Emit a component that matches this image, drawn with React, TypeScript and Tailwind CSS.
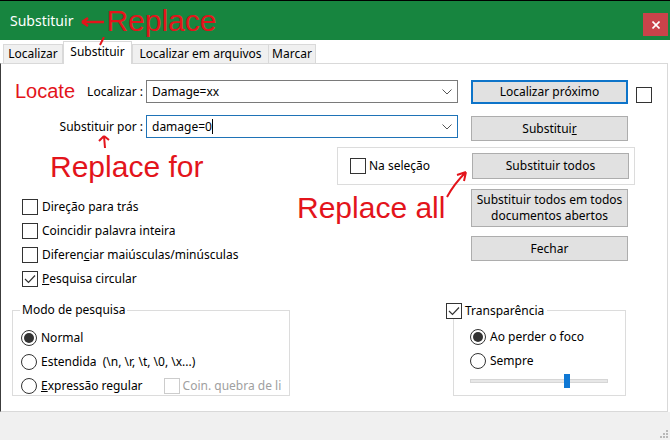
import React from 'react';

const red = "text-[#e3141b] font-['Liberation_Sans',Arial,sans-serif]";

function Check({ checked = false, disabled = false }: { checked?: boolean; disabled?: boolean }) {
  return (
    <span
      className={`w-[16px] h-[16px] shrink-0 border bg-white flex items-center justify-center ${
        disabled ? 'border-[#cccccc]' : 'border-[#333333]'
      }`}
    >
      {checked && (
        <svg width="12" height="10" viewBox="0 0 12 10" fill="none">
          <path d="M1 5 L4.5 8.5 L11 1.5" stroke="#333" strokeWidth="1.2" />
        </svg>
      )}
    </span>
  );
}

function Radio({ checked = false }: { checked?: boolean }) {
  return (
    <span className="w-[16px] h-[16px] shrink-0 rounded-full border border-[#333333] bg-white flex items-center justify-center">
      {checked && <span className="w-[10px] h-[10px] rounded-full bg-[#333333]" />}
    </span>
  );
}

function Btn({ children, className = '', border = 'border border-[#adadad]' }: { children: React.ReactNode; className?: string; border?: string }) {
  return (
    <button
      type="button"
      className={`w-[157px] shrink-0 bg-[#e1e1e1] ${border} flex items-center justify-center text-center leading-[16px] ${className}`}
    >
      {children}
    </button>
  );
}

function Combo({ value, focused = false }: { value: string; focused?: boolean }) {
  return (
    <div
      className={`w-[312px] h-[23px] shrink-0 bg-white border flex items-center pl-[5px] pr-[3px] ${
        focused ? 'border-[#1f73b7]' : 'border-[#7a7a7a]'
      }`}
    >
      <span>{value}</span>
      {focused && <span className="w-px h-[15px] bg-black" />}
      <svg className="ml-auto mr-[2px]" width="10" height="6" viewBox="0 0 10 6" fill="none">
        <path d="M0.5 0.5 L5 5 L9.5 0.5" stroke="#555" strokeWidth="1" />
      </svg>
    </div>
  );
}

function Row({ children }: { children: React.ReactNode }) {
  return <div className="h-[24px] flex items-center gap-[4px]">{children}</div>;
}

export default function App() {
  return (
    <div className="w-[670px] h-[440px] bg-white flex flex-col overflow-hidden font-['Noto_Sans',sans-serif] text-[12px] text-black">
      {/* title bar */}
      <div className="h-[40px] shrink-0 border-t border-black bg-[#17853f] flex items-center pl-[10px] pr-[2px]">
        <span className="text-white text-[14px] leading-none">Substituir</span>
        <svg className="ml-[7px]" width="25" height="14" viewBox="0 0 25 14" fill="none">
          <path d="M2 8 H24 M2 8 L8 4 M2 8 L8 12" stroke="#e3141b" strokeWidth="2.5" />
        </svg>
        <span className={`${red} text-[30px] leading-none ml-[1px]`}>Replace</span>
        <div className="ml-auto self-end mb-[4px] w-[25px] h-[23px] bg-[#c9434a] flex items-center justify-center">
          <svg width="8" height="8" viewBox="0 0 8 8">
            <path d="M0.5 0.5 L7.5 7.5 M7.5 0.5 L0.5 7.5" stroke="#fff" strokeWidth="1.6" />
          </svg>
        </div>
      </div>

      {/* tabs */}
      <div className="h-[24px] shrink-0 flex items-end pl-[3px] relative z-10">
        <div className="w-[60px] h-[19px] mb-px bg-[#f0f0f0] border border-b-0 border-[#d9d9d9] flex items-center justify-center">
          Localizar
        </div>
        <div className="w-[69px] h-[23px] bg-white border border-b-0 border-[#d9d9d9] flex items-start justify-center pt-[1px] relative">
          Substituir
          <svg className="absolute left-[34px] top-[-5px]" width="8" height="9" viewBox="0 0 8 9" fill="none">
            <path d="M6 0 L2 8" stroke="#e3141b" strokeWidth="2" />
          </svg>
        </div>
        <div className="w-[137px] h-[19px] mb-px bg-[#f0f0f0] border border-b-0 border-[#d9d9d9] flex items-center justify-center">
          Localizar em arquivos
        </div>
        <div className="w-[48px] h-[19px] mb-px -ml-px bg-[#f0f0f0] border border-b-0 border-[#d9d9d9] flex items-center justify-center">
          Marcar
        </div>
      </div>

      {/* panel */}
      <div className="h-[349px] shrink-0 -mt-px mr-[2px] border border-[#d9d9d9] border-l-[#3c3c3c] flex flex-col">
        {/* find */}
        <div className="mt-[16px] flex items-start">
          <div className="w-[145px] h-[23px] shrink-0 flex items-center justify-between pl-[14px] pr-[3px]">
            <span className={`${red} text-[20px] leading-none mt-[-2px]`}>Locate</span>
            <span>Localizar :</span>
          </div>
          <Combo value="Damage=xx" />
          <Btn className="ml-[13px] h-[24px]" border="border-2 border-[#0d74c9]">
            Localizar próximo
          </Btn>
          <span className="ml-[8px] mt-[7px]">
            <Check />
          </span>
        </div>

        {/* replace */}
        <div className="mt-[11px] flex items-start">
          <div className="w-[145px] h-[23px] shrink-0 flex items-center justify-end pr-[3px]">Substituir por :</div>
          <Combo value="damage=0" focused />
          <Btn className="ml-[13px] mt-[1px] h-[25px]">
            Substitui<u>r</u>
          </Btn>
        </div>

        {/* selection group */}
        <div className="mt-[6px] flex items-start">
          <div className="w-[336px] h-[38px] shrink-0 relative pl-[49px]">
            <svg className="absolute left-[96px] top-[-12px]" width="14" height="14" viewBox="0 0 14 14" fill="none">
              <path d="M7 1 L8 13 M7 1 L2 6 M7 1 L12 5" stroke="#e3141b" strokeWidth="2" />
            </svg>
            <div className={`${red} text-[30px] leading-none mt-[5px]`}>Replace for</div>
          </div>
          <div className="w-[298px] h-[38px] shrink-0 border border-[#dcdcdc] flex items-center justify-between pl-[12px] pr-[5px]">
            <div className="flex items-center gap-[3px]">
              <Check />
              <span>Na seleção</span>
            </div>
            <Btn className="h-[26px]">Substituir todos</Btn>
          </div>
        </div>

        {/* options + actions */}
        <div className="flex items-start">
          <div className="w-[296px] shrink-0 pl-[21px] pt-[10px] flex flex-col">
            <Row>
              <Check />
              <span>Direção para trás</span>
            </Row>
            <Row>
              <Check />
              <span>Coincidir palavra inteira</span>
            </Row>
            <Row>
              <Check />
              <span>
                Diferen<u>c</u>iar maiúsculas/minúsculas
              </span>
            </Row>
            <Row>
              <Check checked />
              <span>
                <u>P</u>esquisa circular
              </span>
            </Row>
          </div>
          <div className="w-[174px] shrink-0 relative">
            <svg className="absolute left-[148px] top-[-15px]" width="24" height="28" viewBox="0 0 24 28" fill="none">
              <path d="M2 27 Q9 14 21 2 M21 2 L12 5 M21 2 L19 11" stroke="#e3141b" strokeWidth="2" />
            </svg>
            <div className={`${red} text-[30px] leading-none mt-[8px]`}>Replace all</div>
          </div>
          <div className="flex flex-col">
            <Btn className="mt-[4px] h-[38px]">
              Substituir todos em todos
              <br />
              documentos abertos
            </Btn>
            <Btn className="mt-[9px] h-[25px]">Fechar</Btn>
          </div>
        </div>

        {/* groups */}
        <div className="mt-[19px] pl-[11px] flex items-start">
          <div className="w-[278px] h-[86px] shrink-0 border border-[#dcdcdc]">
            <div className="-mt-[9px] ml-[7px] px-[2px] w-fit bg-white leading-[16px]">Modo de pesquisa</div>
            <div className="mt-[8px] pl-[8px] flex flex-col">
              <Row>
                <Radio checked />
                <span>Normal</span>
              </Row>
              <Row>
                <Radio />
                <span className="whitespace-pre">Estendida  (\n, \r, \t, \0, \x...)</span>
              </Row>
              <Row>
                <Radio />
                <span>
                  <u>E</u>xpressão regular
                </span>
                <span className="ml-[17px] flex items-center gap-[3px] text-[#a0a0a0] whitespace-nowrap">
                  <Check disabled />
                  Coin. quebra de li
                </span>
              </Row>
            </div>
          </div>
          <div className="ml-[163px] w-[173px] h-[86px] shrink-0 border border-[#dcdcdc]">
            <div className="-mt-[8px] -ml-[8px] pr-[3px] w-fit bg-white flex items-center gap-[3px] leading-[16px]">
              <Check checked />
              <span>Transparência</span>
            </div>
            <div className="mt-[6px] pl-[16px] flex flex-col">
              <Row>
                <Radio checked />
                <span>Ao perder o foco</span>
              </Row>
              <Row>
                <Radio />
                <span>Sempre</span>
              </Row>
              <div className="mt-[1px] w-[138px] h-[14px] flex items-center">
                <div className="w-full h-[4px] bg-[#e7e7e7] border border-[#d6d6d6] flex items-center">
                  <span className="ml-[93px] w-[6px] h-[14px] shrink-0 bg-[#0f78d4]" />
                </div>
              </div>
            </div>
          </div>
        </div>
      </div>

      {/* bottom strip */}
      <div className="flex-1 bg-[#f0f0f0] flex items-end justify-end pr-[2px] pb-[2px]">
        <svg width="9" height="9" viewBox="0 0 9 9">
          <rect x="7" y="1" width="2" height="2" fill="#b8b8b8" />
          <rect x="4" y="4" width="2" height="2" fill="#b8b8b8" />
          <rect x="7" y="4" width="2" height="2" fill="#b8b8b8" />
          <rect x="1" y="7" width="2" height="2" fill="#b8b8b8" />
          <rect x="4" y="7" width="2" height="2" fill="#b8b8b8" />
          <rect x="7" y="7" width="2" height="2" fill="#b8b8b8" />
        </svg>
      </div>
    </div>
  );
}
